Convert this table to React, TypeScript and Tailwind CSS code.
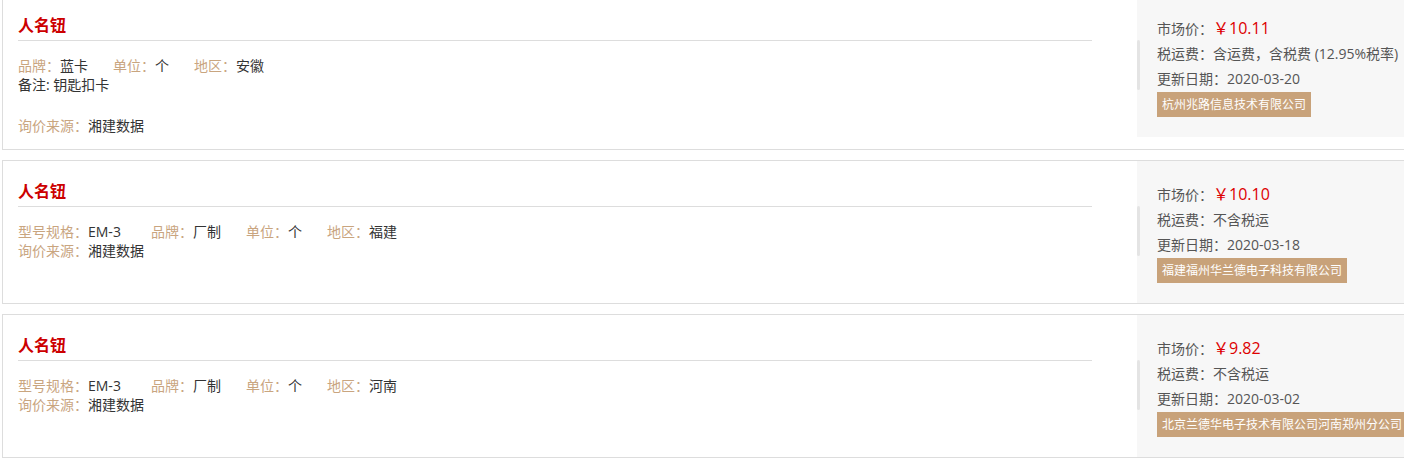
const ITEMS = [
  {
    name: "人名钮",
    fields: [
      ["品牌", "蓝卡"],
      ["单位", "个"],
      ["地区", "安徽"],
    ],
    note: "钥匙扣卡",
    source: "湘建数据",
    price: "10.11",
    tax: "含运费，含税费 (12.95%税率)",
    date: "2020-03-20",
    company: "杭州兆路信息技术有限公司",
  },
  {
    name: "人名钮",
    fields: [
      ["型号规格", "EM-3"],
      ["品牌", "厂制"],
      ["单位", "个"],
      ["地区", "福建"],
    ],
    source: "湘建数据",
    price: "10.10",
    tax: "不含税运",
    date: "2020-03-18",
    company: "福建福州华兰德电子科技有限公司",
  },
  {
    name: "人名钮",
    fields: [
      ["型号规格", "EM-3"],
      ["品牌", "厂制"],
      ["单位", "个"],
      ["地区", "河南"],
    ],
    source: "湘建数据",
    price: "9.82",
    tax: "不含税运",
    date: "2020-03-02",
    company: "北京兰德华电子技术有限公司河南郑州分公司",
  },
];

type Item = (typeof ITEMS)[number] & { note?: string };

export default function App() {
  return (
    <div className="w-[1404px] h-[462px] overflow-hidden bg-white font-['Open_Sans','Noto_Sans_CJK_SC',sans-serif]">
      <div className="mt-[-6px] pl-[2px] flex flex-col gap-[10px]">
        {ITEMS.map((it, i) => (
          <Card key={i} it={it as Item} />
        ))}
      </div>
    </div>
  );
}

function Card({ it }: { it: Item }) {
  return (
    <div className="w-[1416px] border border-[#dddddd] flex items-start">
      <div className="w-[1134px] shrink-0 pl-[15px] pr-[45px] pt-[18px] pb-[14px]">
        <div className="text-[16px] leading-[24px] font-bold text-[#cc0000] pb-[3px] border-b border-[#dddddd]">
          {it.name}
        </div>
        <div className="mt-[15px] text-[14px] leading-[19px] text-[#333333]">
          <div className="flex">
            {it.fields.map(([k, v], j) => (
              <span key={j} className={j === 0 && k === "型号规格" ? "mr-[30px]" : "mr-[25px]"}>
                <span className="text-[#c9a57f]">{k}：</span>
                {v}
              </span>
            ))}
          </div>
          {it.note && <div>备注: {it.note}</div>}
          <div className={it.note ? "mt-[22px]" : ""}>
            <span className="text-[#c9a57f]">询价来源：</span>
            {it.source}
          </div>
        </div>
      </div>
      <div className="relative w-[280px] h-[142px] shrink-0 bg-[#f7f7f7] pl-[20px] pt-[21px] text-[14px] leading-[25px] text-[#555555]">
        <div className="absolute left-0 top-[45px] w-[3px] h-[50px] rounded-sm bg-[#e4e4e4]" />
        <div className="whitespace-nowrap">
          市场价：
          <span className="text-[16px] text-[#dd0000]">￥{it.price}</span>
        </div>
        <div className="whitespace-nowrap">税运费：{it.tax}</div>
        <div className="whitespace-nowrap">更新日期：{it.date}</div>
        <div className="inline-block whitespace-nowrap bg-[#c8a27a] px-[5px] text-[12px] leading-[25px] text-white">
          {it.company}
        </div>
      </div>
    </div>
  );
}
